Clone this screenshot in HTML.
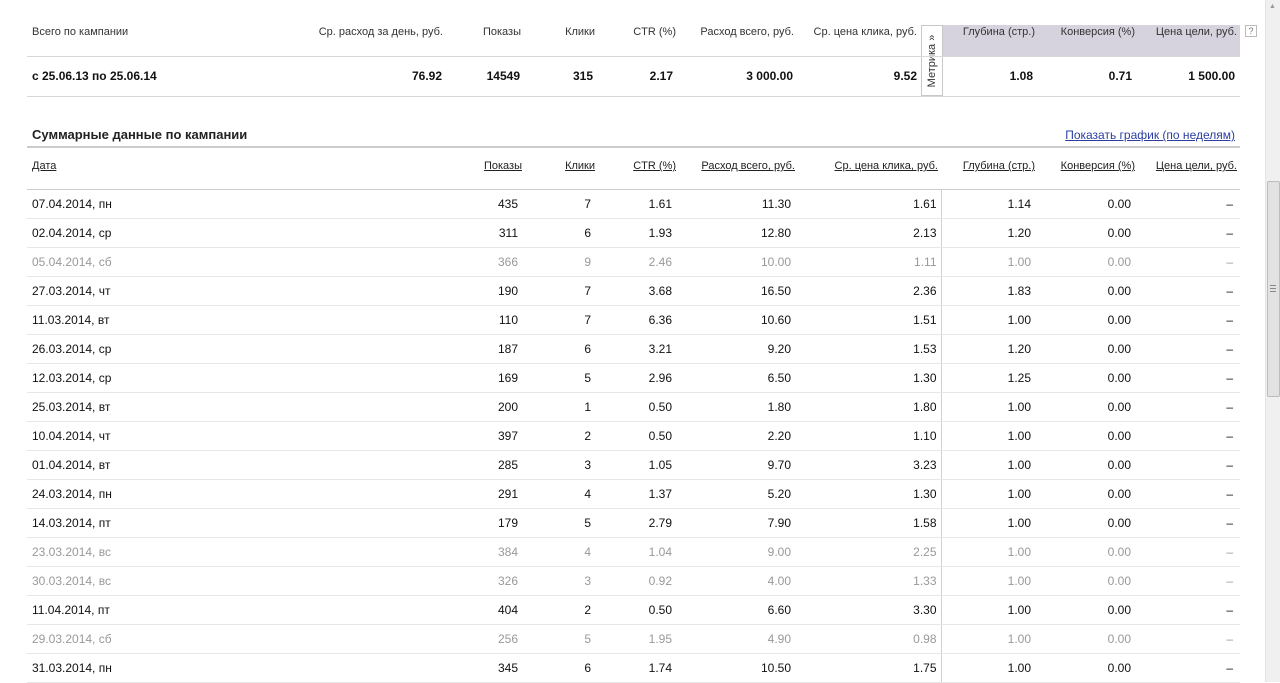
<!DOCTYPE html>
<html><head><meta charset="utf-8"><style>
*{margin:0;padding:0;box-sizing:border-box}
body{width:1280px;height:682px;overflow:hidden;background:#fff;font-family:"Liberation Sans",Arial,sans-serif;color:#111;position:relative}
.a{position:absolute;white-space:nowrap}
.h{font-size:11px;color:#333}
.b{font-size:12px;font-weight:bold;color:#111}
.line{position:absolute;left:27px;width:1213px;height:1px;background:#d8d8d8}
table{position:absolute;left:27px;top:148px;width:1213px;border-collapse:collapse;table-layout:fixed}
td{font-size:12px;height:29px;text-align:right;padding-right:4px;border-bottom:1px solid #e6e6e6;white-space:nowrap;vertical-align:middle}
td:first-child{text-align:left;padding-left:5px}
td:nth-child(7){border-left:1px solid #d0d0d0}
td:nth-child(9){padding-right:7px}
tr.hd td{height:41px;font-size:11px;color:#222;text-decoration:underline;border-bottom:1px solid #ccc;padding-right:0;vertical-align:top;padding-top:12px}
tr.hd td:nth-child(7){border-left:none}
tr.hd td:nth-child(6){padding-right:3px}
tr.hd td:nth-child(9){padding-right:3px}
tr.g td{color:#999}
</style></head><body>
<div class="a" style="left:943px;top:25px;width:297px;height:32px;background:#d6d3de"></div>
<div class="a" style="left:921px;top:25px;width:22px;height:71px;border:1px solid #c8c8c8;background:#fff"></div>
<div class="a" style="left:921px;top:25px;width:22px;height:71px;"><div style="position:absolute;left:11px;top:36px;transform:translate(-50%,-50%) rotate(-90deg);font-size:11px;color:#333;white-space:nowrap">Метрика »</div></div>
<div class="a h" style="left:32px;top:26px">Всего по кампании</div>
<div class="a h" style="right:837px;top:26px">Ср. расход за день, руб.</div>
<div class="a h" style="right:759px;top:26px">Показы</div>
<div class="a h" style="right:685px;top:26px">Клики</div>
<div class="a h" style="right:604px;top:26px">CTR (%)</div>
<div class="a h" style="right:486px;top:26px">Расход всего, руб.</div>
<div class="a h" style="right:363px;top:26px">Ср. цена клика, руб.</div>
<div class="a h" style="right:245px;top:26px">Глубина (стр.)</div>
<div class="a h" style="right:145px;top:26px">Конверсия (%)</div>
<div class="a h" style="right:43px;top:26px">Цена цели, руб.</div>
<div class="a" style="left:1245px;top:25px;width:12px;height:12px;border:1px solid #bbb;font-size:9px;color:#777;text-align:center;line-height:10px">?</div>
<div class="line" style="top:56px"></div>
<div class="a b" style="left:32px;top:69px">с 25.06.13 по 25.06.14</div>
<div class="a b" style="right:838px;top:69px">76.92</div>
<div class="a b" style="right:760px;top:69px">14549</div>
<div class="a b" style="right:687px;top:69px">315</div>
<div class="a b" style="right:607px;top:69px">2.17</div>
<div class="a b" style="right:487px;top:69px">3 000.00</div>
<div class="a b" style="right:363px;top:69px">9.52</div>
<div class="a b" style="right:247px;top:69px">1.08</div>
<div class="a b" style="right:148px;top:69px">0.71</div>
<div class="a b" style="right:45px;top:69px">1 500.00</div>
<div class="line" style="top:96px"></div>
<div class="a" style="left:32px;top:127px;font-size:13px;font-weight:bold;color:#222">Суммарные данные по кампании</div>
<div class="a" style="right:45px;top:128px;font-size:12px;color:#2b3ea0;text-decoration:underline">Показать график (по неделям)</div>
<div class="a" style="left:27px;top:146px;width:1213px;height:2px;background:#ccc"></div>
<table>
<colgroup><col style="width:413px"><col style="width:82px"><col style="width:73px"><col style="width:81px"><col style="width:119px"><col style="width:146px"><col style="width:94px"><col style="width:100px"><col style="width:105px"></colgroup>
<tr class="hd"><td>Дата</td><td>Показы</td><td>Клики</td><td>CTR (%)</td><td>Расход всего, руб.</td><td>Ср. цена клика, руб.</td><td>Глубина (стр.)</td><td>Конверсия (%)</td><td>Цена цели, руб.</td></tr>
<tr><td>07.04.2014, пн</td><td>435</td><td>7</td><td>1.61</td><td>11.30</td><td>1.61</td><td>1.14</td><td>0.00</td><td>–</td></tr>
<tr><td>02.04.2014, ср</td><td>311</td><td>6</td><td>1.93</td><td>12.80</td><td>2.13</td><td>1.20</td><td>0.00</td><td>–</td></tr>
<tr class="g"><td>05.04.2014, сб</td><td>366</td><td>9</td><td>2.46</td><td>10.00</td><td>1.11</td><td>1.00</td><td>0.00</td><td>–</td></tr>
<tr><td>27.03.2014, чт</td><td>190</td><td>7</td><td>3.68</td><td>16.50</td><td>2.36</td><td>1.83</td><td>0.00</td><td>–</td></tr>
<tr><td>11.03.2014, вт</td><td>110</td><td>7</td><td>6.36</td><td>10.60</td><td>1.51</td><td>1.00</td><td>0.00</td><td>–</td></tr>
<tr><td>26.03.2014, ср</td><td>187</td><td>6</td><td>3.21</td><td>9.20</td><td>1.53</td><td>1.20</td><td>0.00</td><td>–</td></tr>
<tr><td>12.03.2014, ср</td><td>169</td><td>5</td><td>2.96</td><td>6.50</td><td>1.30</td><td>1.25</td><td>0.00</td><td>–</td></tr>
<tr><td>25.03.2014, вт</td><td>200</td><td>1</td><td>0.50</td><td>1.80</td><td>1.80</td><td>1.00</td><td>0.00</td><td>–</td></tr>
<tr><td>10.04.2014, чт</td><td>397</td><td>2</td><td>0.50</td><td>2.20</td><td>1.10</td><td>1.00</td><td>0.00</td><td>–</td></tr>
<tr><td>01.04.2014, вт</td><td>285</td><td>3</td><td>1.05</td><td>9.70</td><td>3.23</td><td>1.00</td><td>0.00</td><td>–</td></tr>
<tr><td>24.03.2014, пн</td><td>291</td><td>4</td><td>1.37</td><td>5.20</td><td>1.30</td><td>1.00</td><td>0.00</td><td>–</td></tr>
<tr><td>14.03.2014, пт</td><td>179</td><td>5</td><td>2.79</td><td>7.90</td><td>1.58</td><td>1.00</td><td>0.00</td><td>–</td></tr>
<tr class="g"><td>23.03.2014, вс</td><td>384</td><td>4</td><td>1.04</td><td>9.00</td><td>2.25</td><td>1.00</td><td>0.00</td><td>–</td></tr>
<tr class="g"><td>30.03.2014, вс</td><td>326</td><td>3</td><td>0.92</td><td>4.00</td><td>1.33</td><td>1.00</td><td>0.00</td><td>–</td></tr>
<tr><td>11.04.2014, пт</td><td>404</td><td>2</td><td>0.50</td><td>6.60</td><td>3.30</td><td>1.00</td><td>0.00</td><td>–</td></tr>
<tr class="g"><td>29.03.2014, сб</td><td>256</td><td>5</td><td>1.95</td><td>4.90</td><td>0.98</td><td>1.00</td><td>0.00</td><td>–</td></tr>
<tr><td>31.03.2014, пн</td><td>345</td><td>6</td><td>1.74</td><td>10.50</td><td>1.75</td><td>1.00</td><td>0.00</td><td>–</td></tr>
</table>
<div class="a" style="left:1265px;top:0;width:15px;height:682px;background:#f0f0f0;border-left:1px solid #e4e4e4"></div>
<div class="a" style="left:1267px;top:181px;width:13px;height:216px;background:#e2e2e2;border:1px solid #bcbcbc;border-radius:2px"></div>
<div class="a" style="left:1270px;top:285px;width:6px;height:7px;border-top:1px solid #888;border-bottom:1px solid #888"><div style="margin-top:2px;height:1px;background:#888"></div></div>
<div class="a" style="left:1269px;top:3px;font-size:7px;color:#999">▲</div>
</body></html>
